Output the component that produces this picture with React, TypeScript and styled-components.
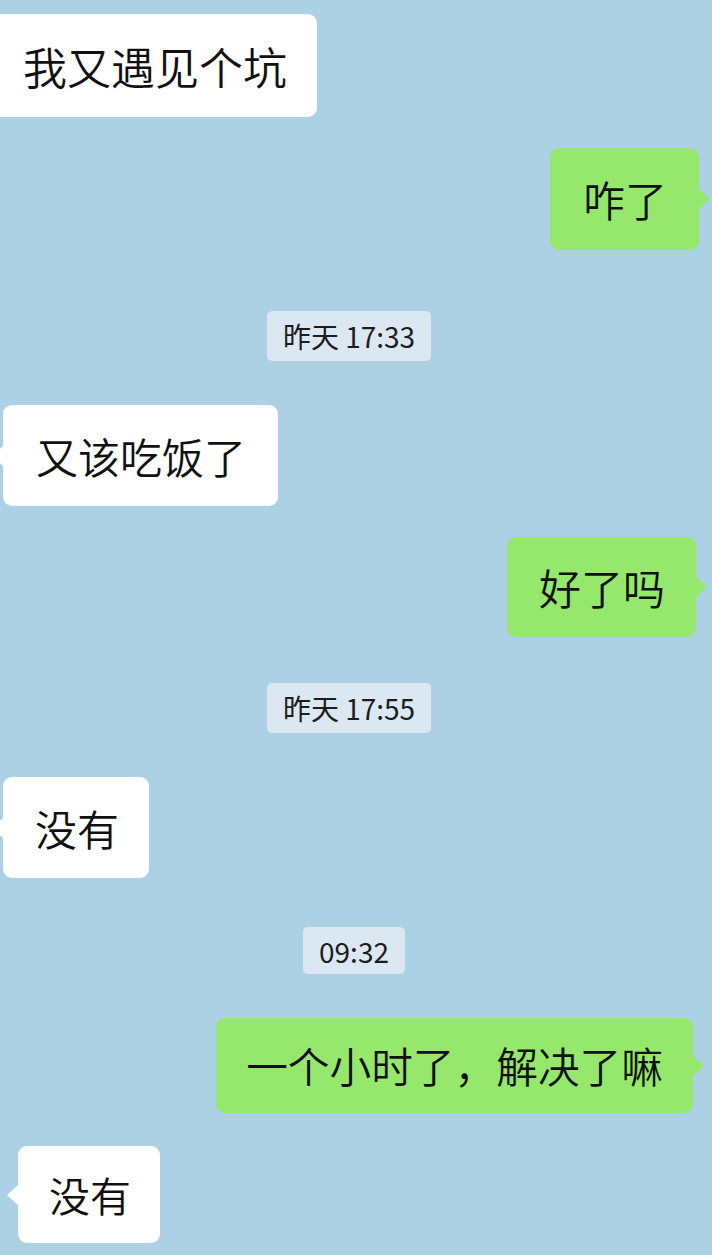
import React from "react";
import styled, { createGlobalStyle } from "styled-components";

const GlobalStyle = createGlobalStyle`
  html, body {
    margin: 0;
    padding: 0;
    background: #acd1e5;
  }
  * { box-sizing: border-box; }
`;

const Page = styled.div`
  width: 712px;
  height: 1255px;
  overflow: hidden;
  background: #acd1e5;
  display: flex;
  flex-direction: column;
  font-family: "Noto Sans CJK SC", "Noto Sans", sans-serif;
`;

const Row = styled.div<{ $side: "left" | "right" | "center"; $top: number; $offset: number }>`
  display: flex;
  justify-content: ${(p) =>
    p.$side === "left" ? "flex-start" : p.$side === "right" ? "flex-end" : "center"};
  margin-top: ${(p) => p.$top}px;
  padding-left: ${(p) => (p.$side === "left" && p.$offset > 0 ? p.$offset : p.$side === "center" ? Math.max(0, -p.$offset) : 0)}px;
  padding-right: ${(p) => (p.$side === "right" ? p.$offset : p.$side === "center" ? Math.max(0, p.$offset) : 0)}px;
  margin-left: ${(p) => (p.$side === "left" && p.$offset < 0 ? p.$offset : 0)}px;
`;

const Bubble = styled.div<{ $mine: boolean; $h: number; $fs: number; $pl: number; $pr: number }>`
  position: relative;
  height: ${(p) => p.$h}px;
  display: flex;
  align-items: center;
  padding: 0 ${(p) => p.$pr}px 0 ${(p) => p.$pl}px;
  border-radius: 9px;
  background: ${(p) => (p.$mine ? "#95e86b" : "#ffffff")};
  color: #111111;
  font-size: ${(p) => p.$fs}px;
  font-weight: 350;
  line-height: 1;
  white-space: nowrap;

  &::before {
    content: "";
    position: absolute;
    top: 50%;
    margin-top: -10px;
    width: 0;
    height: 0;
    border-top: 10px solid transparent;
    border-bottom: 10px solid transparent;
    ${(p) =>
      p.$mine
        ? `right: -11px; border-left: 11px solid #95e86b;`
        : `left: -11px; border-right: 11px solid #ffffff;`}
  }
`;

const Stamp = styled.div<{ $h: number }>`
  height: ${(p) => p.$h}px;
  display: flex;
  align-items: center;
  padding: 0 16px;
  border-radius: 5px;
  background: #dbe8f2;
  color: #1c1c1c;
  font-size: 28px;
  line-height: 1;
  white-space: nowrap;
`;

type Item =
  | { kind: "msg"; mine: boolean; text: string; top: number; offset: number; h: number; fs: number; pl: number; pr: number }
  | { kind: "time"; text: string; top: number; offset: number; h: number };

const items: Item[] = [
  { kind: "msg", mine: false, text: "我又遇见个坑", top: 14, offset: -9, h: 103, fs: 44, pl: 32, pr: 30 },
  { kind: "msg", mine: true, text: "咋了", top: 31, offset: 13, h: 102, fs: 42, pl: 33, pr: 32 },
  { kind: "time", text: "昨天 17:33", top: 61, offset: 14, h: 50 },
  { kind: "msg", mine: false, text: "又该吃饭了", top: 44, offset: 3, h: 101, fs: 42, pl: 33, pr: 32 },
  { kind: "msg", mine: true, text: "好了吗", top: 31, offset: 16, h: 100, fs: 42, pl: 32, pr: 31 },
  { kind: "time", text: "昨天 17:55", top: 46, offset: 14, h: 50 },
  { kind: "msg", mine: false, text: "没有", top: 44, offset: 3, h: 101, fs: 42, pl: 32, pr: 30 },
  { kind: "time", text: "09:32", top: 49, offset: 4, h: 47 },
  { kind: "msg", mine: true, text: "一个小时了，解决了嘛", top: 44, offset: 19, h: 95, fs: 41.7, pl: 30, pr: 30 },
  { kind: "msg", mine: false, text: "没有", top: 33, offset: 18, h: 97, fs: 41, pl: 31, pr: 29 },
];

export default function App() {
  return (
    <>
      <GlobalStyle />
      <Page>
        {items.map((it, i) =>
          it.kind === "time" ? (
            <Row key={i} $side="center" $top={it.top} $offset={it.offset}>
              <Stamp $h={it.h}>{it.text}</Stamp>
            </Row>
          ) : (
            <Row key={i} $side={it.mine ? "right" : "left"} $top={it.top} $offset={it.offset}>
              <Bubble $mine={it.mine} $h={it.h} $fs={it.fs} $pl={it.pl} $pr={it.pr}>
                {it.text}
              </Bubble>
            </Row>
          )
        )}
      </Page>
    </>
  );
}
